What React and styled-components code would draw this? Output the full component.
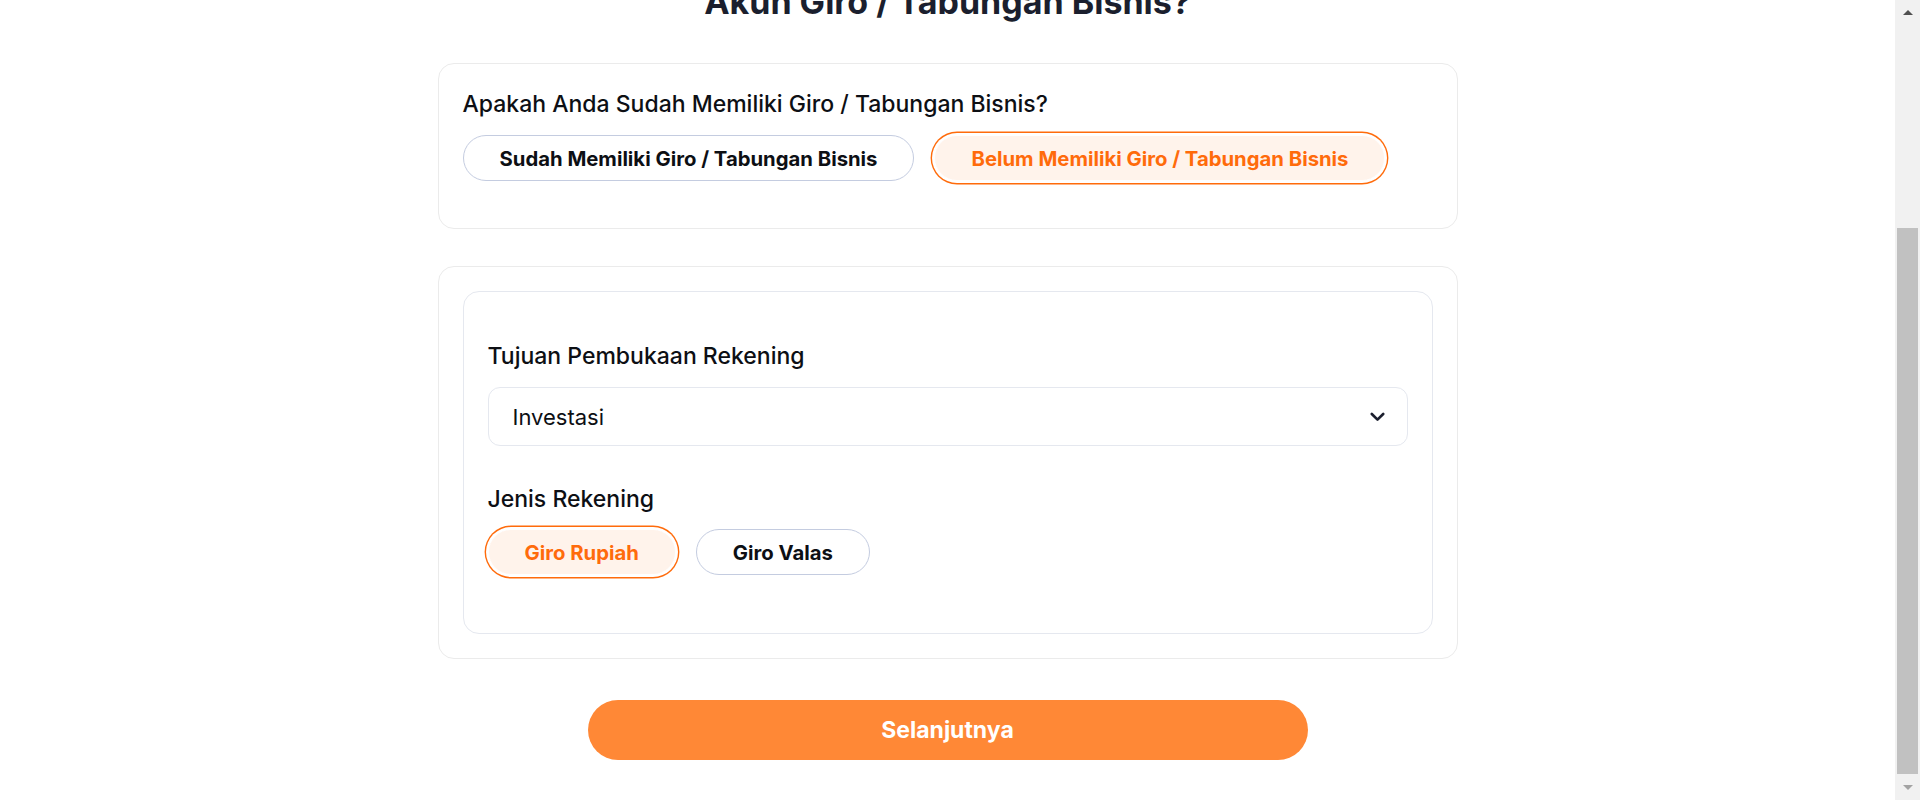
import { useLayoutEffect, useRef, useState } from "react";
import styled, { createGlobalStyle, css } from "styled-components";

const Colors = {
  ink: "#0d0f14",
  title: "#1b1f2e",
  orange: "#ff6b0b",
  orangeBtn: "#ff8836",
  peach: "#fff3eb",
  line: "#ebebeb",
  lineSoft: "#e5e8ef",
  pillLine: "#c4cce0",
};

const BAR = 25; // width of the window scrollbar
const ARROW = 25.5; // height of each arrow box

const GlobalStyle = createGlobalStyle`
  html, body {
    margin: 0;
    background: #ffffff;
  }
  body {
    font-family: Inter, "Noto Sans", "Liberation Sans", sans-serif;
    color: ${Colors.ink};
  }
  * {
    box-sizing: border-box;
  }
`;

// how far from the top of the viewport the first card sits in the design
const CARD_OFFSET = 63;

export default function App() {
  const [hasAccount, setHasAccount] = useState(false);
  const [jenis, setJenis] = useState("rupiah");
  const [thumb, setThumb] = useState({ top: ARROW, height: 0 });
  const firstCard = useRef(null);

  useLayoutEffect(() => {
    const el = firstCard.current;
    if (!el) return;
    const top = el.getBoundingClientRect().top + window.scrollY;
    window.scrollTo(0, top - CARD_OFFSET);

    const docH = document.documentElement.scrollHeight;
    const viewH = window.innerHeight;
    const track = viewH - ARROW * 2;
    setThumb({
      top: ARROW + (track * window.scrollY) / docH,
      height: (track * viewH) / docH,
    });
  }, []);

  return (
    <>
      <GlobalStyle />
      <Page>
        <Heading>
          Apakah Anda Sudah Memiliki
          <br />
          Akun Giro / Tabungan Bisnis?
        </Heading>

        <Card ref={firstCard} $compact>
          <Label>Apakah Anda Sudah Memiliki Giro / Tabungan Bisnis?</Label>
          <OptionRow>
            <Pill $active={hasAccount} onClick={() => setHasAccount(true)}>
              Sudah Memiliki Giro / Tabungan Bisnis
            </Pill>
            <Pill $active={!hasAccount} onClick={() => setHasAccount(false)}>
              Belum Memiliki Giro / Tabungan Bisnis
            </Pill>
          </OptionRow>
        </Card>

        <Card>
          <InnerCard>
            <Label>Tujuan Pembukaan Rekening</Label>
            <SelectBox type="button">
              <span>Investasi</span>
              <svg width="15" height="10" viewBox="0 0 15 10" fill="none">
                <path
                  d="M1.8 2L7.5 7.7L13.2 2"
                  stroke={Colors.title}
                  strokeWidth="2.6"
                  strokeLinecap="round"
                  strokeLinejoin="round"
                />
              </svg>
            </SelectBox>

            <Group>
              <Label>Jenis Rekening</Label>
              <OptionRow>
                <Pill $active={jenis === "rupiah"} onClick={() => setJenis("rupiah")}>
                  Giro Rupiah
                </Pill>
                <Pill $active={jenis === "valas"} onClick={() => setJenis("valas")}>
                  Giro Valas
                </Pill>
              </OptionRow>
            </Group>
          </InnerCard>
        </Card>

        <NextButton type="button">Selanjutnya</NextButton>
      </Page>

      <ScrollTrack aria-hidden="true">
        <ArrowBox>
          <Triangle />
        </ArrowBox>
        <Thumb style={{ top: thumb.top, height: thumb.height }} />
        <ArrowBox $down>
          <Triangle $down />
        </ArrowBox>
      </ScrollTrack>
    </>
  );
}

const Page = styled.main`
  display: flex;
  flex-direction: column;
  align-items: center;
  margin-right: ${BAR}px;
  padding: 239px 24px 40px;
`;

const Heading = styled.h1`
  margin: 0 0 41px;
  font-size: 34px;
  line-height: 40px;
  font-weight: 700;
  text-align: center;
  color: ${Colors.title};
`;

const Card = styled.section`
  width: 1020px;
  padding: ${({ $compact }) => ($compact ? "24px 24px 47px" : "24px")};
  border: 1px solid ${Colors.line};
  border-radius: 16px;
  background: #fff;

  & + & {
    margin-top: 37px;
  }
`;

const InnerCard = styled.div`
  padding: 48px 24px 58px;
  border: 1px solid ${Colors.lineSoft};
  border-radius: 16px;
`;

const Label = styled.p`
  margin: 0 0 14px;
  font-size: 23px;
  line-height: 33px;
  font-weight: 500;
  color: ${Colors.ink};
`;

const Group = styled.div`
  margin-top: 37px;

  ${Label} {
    margin-bottom: 13px;
  }
`;

const OptionRow = styled.div`
  display: flex;
  gap: 20px;
`;

const Pill = styled.button`
  height: 46px;
  padding: 0 36px;
  border-radius: 999px;
  border: 1px solid ${Colors.pillLine};
  background: #fff;
  font-family: inherit;
  font-size: 20.3px;
  font-weight: 700;
  color: ${Colors.ink};
  cursor: pointer;

  ${({ $active }) =>
    $active &&
    css`
      border: 1.5px solid #fff;
      background: ${Colors.peach};
      color: ${Colors.orange};
      box-shadow: 0 0 0 2px #fff, 0 0 0 3.4px ${Colors.orange};
    `}
`;

const SelectBox = styled.button`
  display: flex;
  align-items: center;
  justify-content: space-between;
  width: 100%;
  height: 59px;
  padding: 0 22px 0 24px;
  border: 1px solid ${Colors.lineSoft};
  border-radius: 12px;
  background: #fff;
  font-family: inherit;
  font-size: 22px;
  font-weight: 400;
  color: ${Colors.ink};
  text-align: left;
  cursor: pointer;
`;

const NextButton = styled.button`
  width: 720px;
  height: 60px;
  margin-top: 41px;
  border: none;
  border-radius: 30px;
  background: ${Colors.orangeBtn};
  color: #fff;
  font-family: inherit;
  font-size: 23px;
  font-weight: 700;
  cursor: pointer;
`;

/* window scrollbar, drawn over the right edge of the viewport */
const ScrollTrack = styled.div`
  position: fixed;
  top: 0;
  right: 0;
  bottom: 0;
  width: ${BAR}px;
  background: #f1f1f1;
  display: flex;
  flex-direction: column;
  justify-content: space-between;
`;

const ArrowBox = styled.div`
  height: ${ARROW}px;
  display: flex;
  align-items: center;
  justify-content: center;
`;

const Triangle = styled.span`
  width: 0;
  height: 0;
  border-left: 5.5px solid transparent;
  border-right: 5.5px solid transparent;
  ${({ $down }) =>
    $down
      ? css`
          border-top: 5px solid #a3a3a3;
        `
      : css`
          border-bottom: 5px solid #505050;
        `}
`;

const Thumb = styled.div`
  position: absolute;
  left: 2px;
  right: 2px;
  background: #c1c1c1;
`;
